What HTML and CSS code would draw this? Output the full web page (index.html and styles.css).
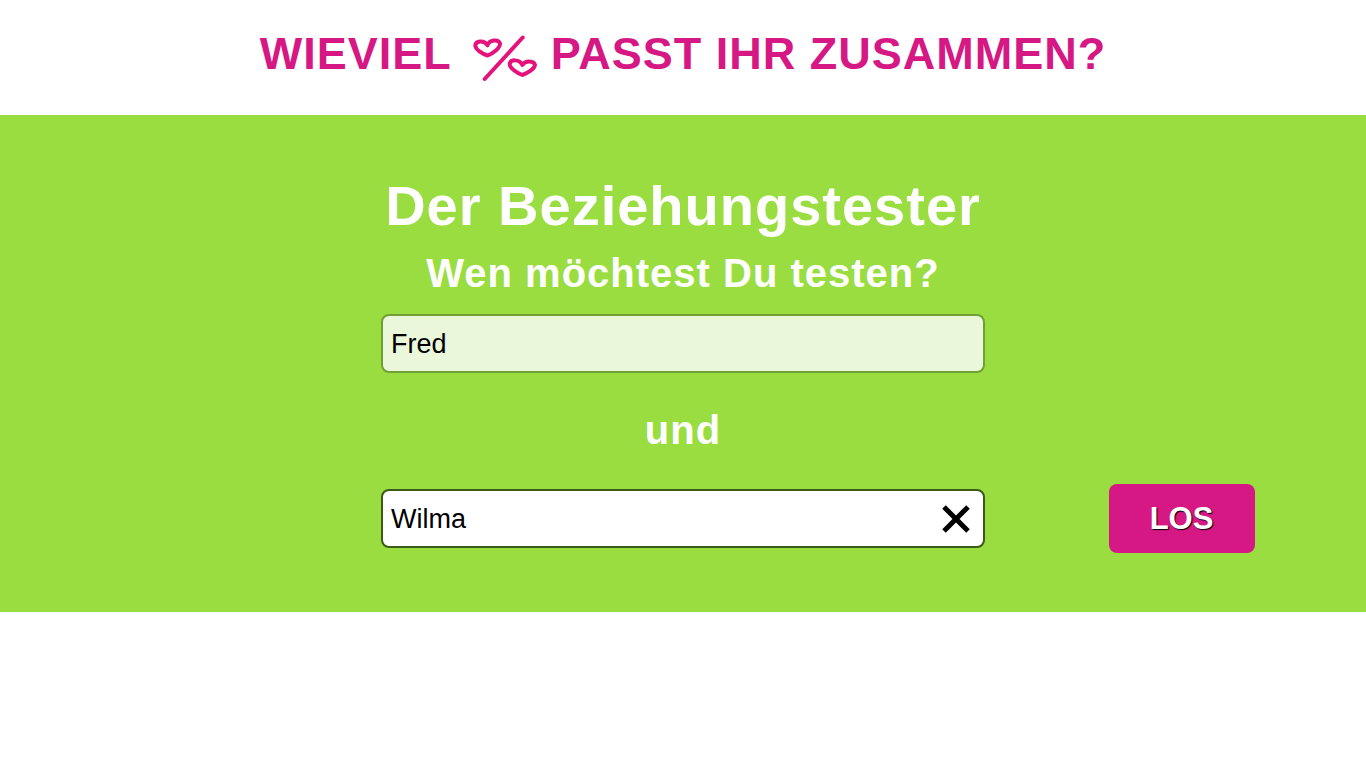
FILE: index.html
```html
<!DOCTYPE html>
<html lang="de">
<head>
<meta charset="utf-8">
<title>Der Beziehungstester</title>
<link rel="stylesheet" href="styles.css">
</head>
<body>
<header class="site-header">
  <h1 class="site-title">
    <span>WIEVIEL</span>
    <svg class="logo" viewBox="0 0 68 48" aria-hidden="true">
      <path d="M51.700 3.500L13.700 45"/>
      <path d="M16.700 21.500C11 20 4.500 15.500 4.300 11.500C4.500 7 13 5.500 16.500 11.300C18 6 27.500 4.500 29 9.500C29.500 14 21.500 19.500 16.700 21.500Z"/>
      <path d="M51.300 41C46 39 38.500 34 38.700 30C39.500 25 48.500 25 51.300 31C54 26 63 26.500 64 31C63.500 35 56 39.500 51.300 41Z"/>
    </svg>
    <span>PASST IHR ZUSAMMEN?</span>
  </h1>
</header>
<main class="tester">
  <h2 class="title">Der Beziehungstester</h2>
  <h3 class="subtitle">Wen möchtest Du testen?</h3>
  <form class="form">
    <input class="field field-first" type="text" value="Fred" aria-label="Erster Name">
    <p class="and">und</p>
    <div class="second">
      <input class="field field-active" type="text" value="Wilma" aria-label="Zweiter Name">
      <button class="clear" type="button" aria-label="Löschen"><svg viewBox="0 0 28 28"><path d="M2 2L26 26M26 2L2 26"/></svg></button>
    </div>
    <button class="submit" type="submit">LOS</button>
  </form>
</main>
</body>
</html>
```
FILE: styles.css
```css
* { box-sizing: border-box; }
body { margin: 0; background: #fff; font-family: "Liberation Sans", Arial, sans-serif; }
h1, h2, h3, p { margin: 0; font-weight: bold; }
.site-header { padding: 28px 16px 35px; }
.site-title { display: flex; justify-content: center; color: #d51883; font-size: 45px; line-height: 52px; letter-spacing: 1px; }
.logo { width: 68px; height: 48px; margin: 6px 12px -2px 19px; fill: none; stroke: #e6127b; stroke-width: 4; stroke-linecap: round; stroke-linejoin: round; }
.tester { padding: 60px 0 59px; background: #9add40; color: #fff; text-align: center; }
.title { font-size: 56px; line-height: 62px; letter-spacing: 1px; }
.subtitle { font-size: 40px; line-height: 46px; margin-top: 13px; letter-spacing: 1px; }
.form { display: grid; grid-template-columns: 1fr minmax(0, 604px) 1fr; margin-top: 18px; align-items: center; }
.field { grid-column: 2; width: 100%; height: 59px; padding: 2px 8px 0; border: 2px solid #729f33; border-radius: 8px; background: #ebf7da; color: #000; font: 27px "Liberation Sans", Arial, sans-serif; outline: none; }
.field-active { background: #fff; border-color: #3c5a17; padding-right: 48px; }
.and { grid-column: 2; padding: 34px 0 31px; font-size: 40px; line-height: 46px; letter-spacing: 1px; }
.second { grid-column: 2; position: relative; }
.clear { position: absolute; right: 15px; top: 16px; width: 28px; height: 28px; padding: 0; border: 0; background: none; }
.clear svg { display: block; fill: none; stroke: #000; stroke-width: 5; }
.submit { grid-column: 3; justify-self: center; margin-left: 12px; width: 146px; height: 69px; padding: 0; border: 0; border-radius: 8px; background: #d51883; color: #fff; font: bold 31px "Liberation Sans", Arial, sans-serif; text-shadow: 1px 1px 1px #000; }
```
